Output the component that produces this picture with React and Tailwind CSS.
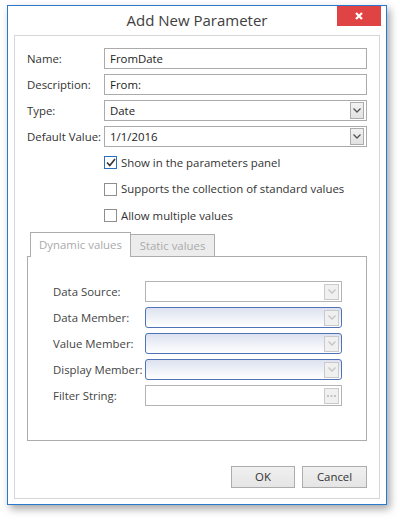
import React from "react";

const font = { fontFamily: '"Open Sans", "Noto Sans", sans-serif' };

function Chevron({ color = "#555" }) {
  return (
    <svg width="8" height="5" viewBox="0 0 8 5">
      <path d="M0.5 0.5 L4 4 L7.5 0.5" fill="none" stroke={color} strokeWidth="1.3" />
    </svg>
  );
}

function TextInput({ value }) {
  return (
    <div className="flex-1 h-[21px] border border-[#ababab] bg-white flex items-center pl-[5px] text-[11.4px] text-[#222]">
      {value}
    </div>
  );
}

function Combo({ value }) {
  return (
    <div className="flex-1 h-[21px] border border-[#ababab] bg-white flex items-center pl-[5px] pr-[2px] text-[11.4px] text-[#222]">
      <span className="flex-1">{value}</span>
      <div className="w-[14px] h-[17px] border border-[#acacac] bg-gradient-to-b from-[#f2f2f2] to-[#e2e2e2] flex items-center justify-center">
        <Chevron />
      </div>
    </div>
  );
}

function Row({ label, children }) {
  return (
    <div className="flex items-center h-[21px]">
      <div className="w-[77px] text-[11.4px] text-[#333] whitespace-nowrap">{label}</div>
      {children}
    </div>
  );
}

function Check({ checked, label }) {
  return (
    <div className="flex items-center h-[21px] pl-[77px]">
      <div
        className={
          "w-[13px] h-[13px] border bg-white flex items-center justify-center " +
          (checked ? "border-[#2b6fc0]" : "border-[#8e8e8e]")
        }
      >
        {checked && (
          <svg width="10" height="9" viewBox="0 0 10 9">
            <path d="M1 4.5 L3.8 7.5 L9 1" fill="none" stroke="#333" strokeWidth="1.6" />
          </svg>
        )}
      </div>
      <span className="ml-[4px] text-[11.4px] text-[#333]">{label}</span>
    </div>
  );
}

function DisCombo({ blue, dots }) {
  return (
    <div
      className={
        "flex-1 h-[21px] border flex items-center justify-end pr-[2px] " +
        (blue
          ? "border-[#4f72b8] rounded-[3px] bg-gradient-to-b from-[#dce2ef] to-white"
          : "border-[#b4b4b4] bg-white")
      }
    >
      <div className="w-[15px] h-[16px] border border-[#cacaca] bg-[#f0f0f0] flex items-center justify-center">
        {dots ? (
          <svg width="9" height="2" viewBox="0 0 9 2">
            <rect x="0" y="0" width="2" height="2" fill="#c4c4c4" />
            <rect x="3.5" y="0" width="2" height="2" fill="#c4c4c4" />
            <rect x="7" y="0" width="2" height="2" fill="#c4c4c4" />
          </svg>
        ) : (
          <Chevron color="#c4c4c4" />
        )}
      </div>
    </div>
  );
}

function TabRow({ label, children }) {
  return (
    <div className="flex items-center h-[21px]">
      <div className="w-[92px] text-[11.4px] text-[#444] whitespace-nowrap">{label}</div>
      {children}
    </div>
  );
}

export default function App() {
  return (
    <div className="w-[400px] h-[520px] bg-white pt-[5px] pl-[7px]" style={font}>
      <div className="w-[380px] h-[500px] border border-[#2a78cf] bg-white shadow-[3px_4px_8px_rgba(0,0,0,0.35)] flex flex-col">
        <div className="h-[29px] flex items-start relative">
          <div className="flex-1 h-[29px] flex items-center justify-center text-[15px] text-[#404040]">
            Add New Parameter
          </div>
          <div className="absolute right-[5px] top-0 w-[44px] h-[20px] bg-[#e04343] flex items-center justify-center">
            <svg width="8" height="8" viewBox="0 0 8 8">
              <path d="M1 1 L7 7 M7 1 L1 7" stroke="white" strokeWidth="2.2" />
            </svg>
          </div>
        </div>
        <div className="mx-[6px] mb-[5px] flex-1 border border-[#d6d6d6] bg-white pt-[12px] px-[12px] flex flex-col">
          <div className="flex flex-col gap-[5px]">
            <Row label="Name:">
              <TextInput value="FromDate" />
            </Row>
            <Row label="Description:">
              <TextInput value="From:" />
            </Row>
            <Row label="Type:">
              <Combo value="Date" />
            </Row>
            <Row label="Default Value:">
              <Combo value="1/1/2016" />
            </Row>
          </div>
          <div className="flex flex-col gap-[5.5px] mt-[5px]">
            <Check checked label="Show in the parameters panel" />
            <Check label="Supports the collection of standard values" />
            <Check label="Allow multiple values" />
          </div>
          <div className="mt-[5px] flex items-end pl-[3px] h-[25px]">
            <div className="w-[101px] h-[25px] border border-[#acacac] border-b-0 bg-white flex items-center justify-center text-[11.4px] text-[#aaaaaa] relative z-10 -mb-px pb-px">
              Dynamic values
            </div>
            <div className="w-[84px] h-[22px] border border-l-0 border-[#acacac] border-b-0 bg-[#ececec] flex items-center justify-center text-[11.4px] text-[#aaaaaa]">
              Static values
            </div>
          </div>
          <div className="h-[185px] border border-[#acacac] pl-[25px] pr-[24px] pt-[24px] flex flex-col gap-[5px]">
            <TabRow label="Data Source:">
              <DisCombo />
            </TabRow>
            <TabRow label="Data Member:">
              <DisCombo blue />
            </TabRow>
            <TabRow label="Value Member:">
              <DisCombo blue />
            </TabRow>
            <TabRow label="Display Member:">
              <DisCombo blue />
            </TabRow>
            <TabRow label="Filter String:">
              <DisCombo dots />
            </TabRow>
          </div>
          <div className="mt-[25px] flex justify-end gap-[7px]">
            <div className="w-[64px] h-[22px] border border-[#acacac] bg-gradient-to-b from-[#f0f0f0] to-[#e5e5e5] flex items-center justify-center text-[11.4px] text-[#333]">
              OK
            </div>
            <div className="w-[65px] h-[22px] border border-[#acacac] bg-gradient-to-b from-[#f0f0f0] to-[#e5e5e5] flex items-center justify-center text-[11.4px] text-[#333]">
              Cancel
            </div>
          </div>
        </div>
      </div>
    </div>
  );
}
